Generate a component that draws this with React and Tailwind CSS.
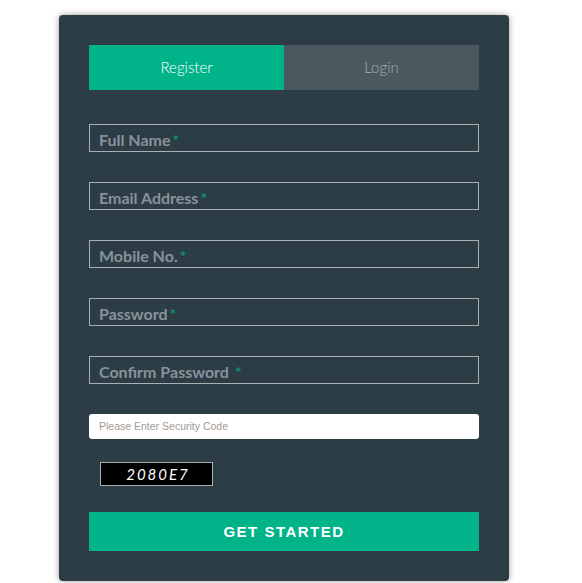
// App.jsx
// Register / login card

const fields = [
  { label: 'Full Name', star: 'ml-0.5' },
  { label: 'Email Address', star: 'ml-0.5' },
  { label: 'Mobile No.', star: 'ml-0.5' },
  { label: 'Password', star: 'ml-0.5' },
  { label: 'Confirm Password', star: 'ml-1.5' },
];

const App = () => {
  return (
    <div className="min-h-[583px] bg-white pl-[59px] pt-[15px] font-['Lato',sans-serif]">
      <div className="flex h-[566px] w-[450px] flex-col rounded-[4px] bg-[#2d3d46] p-[30px] shadow-[0_0_6px_rgba(0,0,0,0.4)]">
        {/* Tabs */}
        <div className="flex h-[45px] text-[15px] font-light">
          <div className="flex w-[195px] items-center justify-center bg-[#00b388] text-white">Register</div>
          <div className="flex w-[195px] items-center justify-center bg-[#4a5960] text-[#a3b3b3]">Login</div>
        </div>

        {/* Outlined fields */}
        <div className="mt-[34px] flex flex-col gap-[30px]">
          {fields.map((field) => (
            <div
              key={field.label}
              className="flex h-[28px] items-end border border-[#a5b2b0] px-[9px] text-[16px] leading-[22px] font-bold text-[#87929a]"
            >
              <span>{field.label}</span>
              <span className={`${field.star} font-normal text-[#00a880]`}>*</span>
            </div>
          ))}
        </div>

        {/* Security code */}
        <div className="mt-[30px] flex h-[25px] items-center rounded-[3px] bg-white px-[10px] font-['Liberation_Sans',sans-serif] text-[10.5px] text-[#a39a94]">
          Please Enter Security Code
        </div>

        <div className="mt-[23px] ml-[11px] flex h-[24px] w-[113px] items-center justify-center border border-[#a5b2b0] bg-black pl-[3px] font-['Lato',sans-serif] text-[15px] font-normal tracking-[2px] text-white italic">
          2080E7
        </div>

        <button className="mt-[26px] flex h-[39px] w-full items-center justify-center bg-[#00b388] pt-[1px] font-['Liberation_Sans',sans-serif] text-[15px] font-bold tracking-[1.5px] text-white">
          GET STARTED
        </button>
      </div>
    </div>
  );
};

export default App;
